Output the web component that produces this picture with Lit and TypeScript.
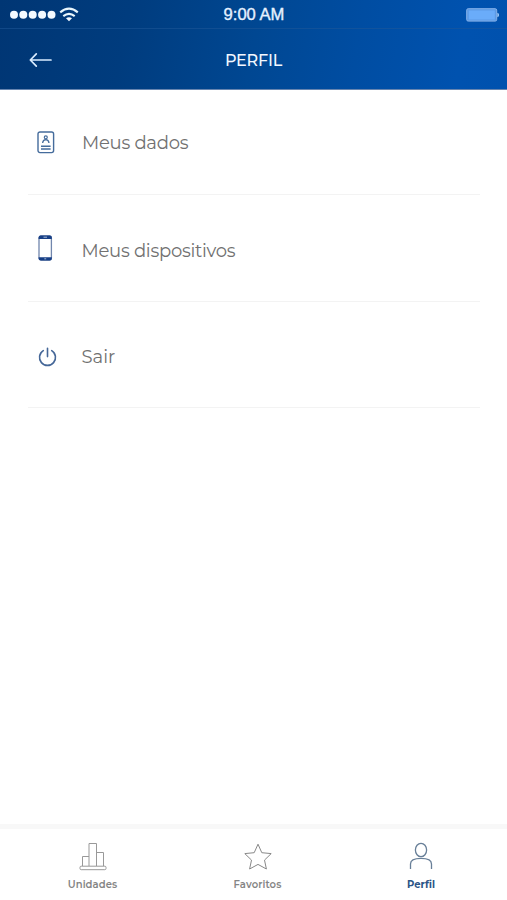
import { LitElement, html, css, svg } from "lit";
import { customElement } from "lit/decorators.js";

const badge = svg`<svg width="18" height="23" viewBox="0 0 18 23" fill="none" stroke="#456c9c" stroke-width="1.4">
  <rect x="1" y="1" width="15.6" height="20.6" rx="2"/>
  <circle cx="8.8" cy="6.3" r="1.5" stroke-width="1.2"/><path d="M5.6 12 Q6 8.8 8.8 8.6 Q11.6 8.8 12 12" stroke-width="1.3"/>
  <path d="M4 15.3H13.6M4 18H13.6" stroke-width="1.5"/></svg>`;
const phone = svg`<svg width="15" height="26" viewBox="0 0 15 26">
  <rect x="1" y="1" width="12.4" height="24" rx="2" fill="#fff" stroke="#7186ad" stroke-width="1.3"/>
  <path d="M.6 4V2.6Q.6.5 2.7.5H11.7Q13.8.5 13.8 2.6V4ZM.6 22.2H13.8V23.4Q13.8 25.5 11.7 25.5H2.7Q.6 25.5.6 23.4Z" fill="#173f86"/>
  <path d="M5.5 2.2H9M6.3 23.8H8.2" stroke="#b9c8e0" stroke-width=".9"/></svg>`;
const power = svg`<svg width="19" height="20" viewBox="0 0 19 20" fill="none" stroke="#456798" stroke-width="1.6" stroke-linecap="round">
  <path d="M5.3 3.6A8 8 0 1 0 13.7 3.6M9.5 1.2V9.6"/></svg>`;

@customElement("app-root")
export class AppRoot extends LitElement {
  static styles = css`
    :host { display: flex; flex-direction: column; width: 507px; height: 900px; background: #fff; overflow: hidden;
      font-family: Montserrat, Inter, "Liberation Sans", sans-serif; }
    svg { display: block; flex: none; }
    .top { height: 89px; background: linear-gradient(100deg, #003674 0%, #003c7e 25%, #004792 50%, #004da2 70%, #0052af 90%, #0051ae 100%); color: #f3f8ff;
      border-bottom: 1px solid #6785b0; background-clip: padding-box; box-sizing: content-box; }
    .status, .nav { display: grid; grid-template-columns: 1fr auto 1fr; align-items: center; box-sizing: border-box; }
    .status { height: 29px; padding: 1px 8px 0 9px; border-bottom: 1px solid #1f589888; }
    .time { font: 400 16.6px/20px "Liberation Sans", Arial, sans-serif; color: #e6f1ff; -webkit-text-stroke: .35px #e6f1ff; padding-top: 1px; }
    .battery { justify-self: end; }
    .nav { height: 60px; padding: 2px 29px 0; }
    .title { font-size: 16px; line-height: 20px; font-weight: 500; letter-spacing: -.2px; padding-top: 1px; }
    .list { flex: 1; padding: 0 27px 0 28px; }
    .row { display: flex; align-items: flex-start; box-sizing: border-box; height: 107px; border-bottom: 1px solid #f3f3f3; color: #717171; }
    .first { height: 105px; padding-top: 41px; }
    .second { padding-top: 40px; }
    .third { height: 106px; padding-top: 45px; }
    .icon { width: 54px; flex: none; box-sizing: border-box; }
    .first .icon { padding-left: 8.7px; }
    .second .icon { padding-left: 9.7px; }
    .third .icon { padding-left: 9.7px; }
    .label { font-size: 18px; line-height: 22px; font-weight: 400; letter-spacing: -.25px; }
    .first .label { margin-top: 1px; }
    .second .label { margin-top: 5px; margin-left: -.5px; }
    .third .label { margin-top: -1px; margin-left: -.5px; letter-spacing: 0; }
    .tabs { height: 76px; border-top: 5px solid #f8f8f8; box-sizing: border-box; display: grid; grid-template-columns: 165px 165px 163px; padding-left: 10px; }
    .tab { display: flex; flex-direction: column; align-items: center; color: #858585; font-size: 10px; line-height: 14px; font-weight: 600; padding-top: 13px; gap: 7px; letter-spacing: .1px; }
    .active { color: #2c5587; font-weight: 700; letter-spacing: 0; padding-right: 1px; }
  `;
  render() {
    return html`
      <header class="top">
        <div class="status">
          <svg width="70" height="18" viewBox="0 0 70 18" fill="#f4faff">
            ${[5, 14.3, 23.7, 33.1, 42.5].map((x) => svg`<circle cx=${x} cy="8.8" r="4"/>`)}
            <g fill="none" stroke="#e8f6fc" stroke-width="2.1"><path d="M51.2 6.4Q60 -1.1 68.8 6.4M54.3 10.1Q60 5.5 65.7 10.1"/></g>
            <path d="M57 12.3Q60 10 63 12.3L60 15.2Z"/>
          </svg>
          <span class="time">9:00 AM</span>
          <svg class="battery" width="33" height="14" viewBox="0 0 33 14"><rect x=".7" y=".7" width="30" height="12.4" rx="1.5" fill="#5c9ae6" stroke="#86b2ea"/><rect x="2.8" y="2.5" width="26" height="9" fill="#6aacfa"/><path d="M31.4 4.8Q33 5 33 7T31.4 9.2Z" fill="#a9d0fa"/></svg>
        </div>
        <div class="nav">
          <svg width="24" height="16" viewBox="0 0 24 16" fill="none" stroke="#d9ecff" stroke-width="1.7" stroke-linecap="round" stroke-linejoin="round"><path d="M7.3 1.8L1.3 8L7.3 14.2M1.8 8H22"/></svg>
          <span class="title">PERFIL</span><span></span>
        </div>
      </header>
      <main class="list">
        <div class="row first"><span class="icon">${badge}</span><span class="label">Meus dados</span></div>
        <div class="row second"><span class="icon">${phone}</span><span class="label">Meus dispositivos</span></div>
        <div class="row third"><span class="icon">${power}</span><span class="label">Sair</span></div>
      </main>
      <nav class="tabs">
        <div class="tab">
          <svg width="28" height="29" viewBox="0 0 28 29" fill="none" stroke="#999" stroke-width="1"><path d="M3.5 24V14.5H10M10 24V1.5H17.5V24M17.5 10.5H24.5V24"/><rect x="1" y="24.2" width="26" height="3.5" rx="1.2"/></svg>
          <span>Unidades</span></div>
        <div class="tab">
          <svg width="28" height="29" viewBox="0 0 28 29" fill="none" stroke="#888" stroke-width="1"><path d="M14 2.2L17.8 10.7L27.2 11.6L20.5 18.1L22.4 27L14 22.4L5.6 27L7.5 18.1L.8 11.6L10.2 10.7Z"/></svg>
          <span>Favoritos</span></div>
        <div class="tab active">
          <svg width="24" height="29" viewBox="0 0 24 29" fill="none" stroke="#687f98" stroke-width="1.3"><ellipse cx="12" cy="8" rx="5.6" ry="6.7"/><path d="M1.5 27V22Q1.5 16.3 12 16.3T22.5 22V27"/></svg>
          <span>Perfil</span></div>
      </nav>`;
  }
}
